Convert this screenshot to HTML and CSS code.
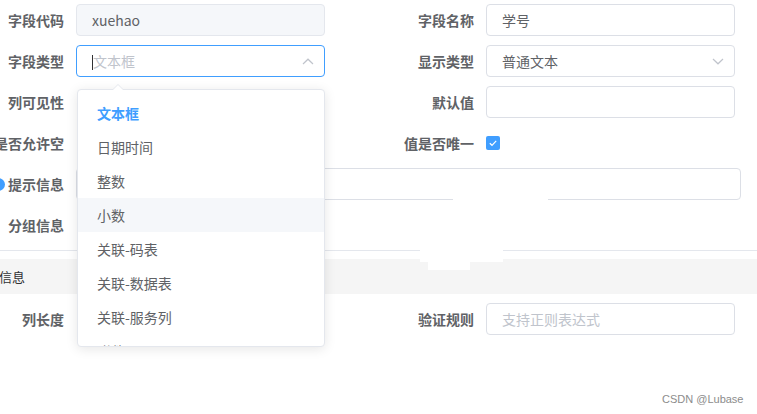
FILE: index.html
```html
<!DOCTYPE html>
<html lang="zh">
<head>
<meta charset="utf-8">
<link rel="stylesheet" href="styles.css">
</head>
<body>
<div class="page">
  <div class="row">
    <div class="item">
      <label class="label">字段代码</label>
      <div class="input disabled">xuehao</div>
    </div>
    <div class="item">
      <label class="label">字段名称</label>
      <div class="input">学号</div>
    </div>
  </div>
  <div class="row">
    <div class="item">
      <label class="label">字段类型</label>
      <div class="input select focused">
        <span class="caret"></span><span class="placeholder">文本框</span>
        <svg class="arrow" width="12" height="7" viewBox="0 0 12 7"><path d="M1 6L6 1.2L11 6" fill="none" stroke="#c0c4cc" stroke-width="1.2"/></svg>
      </div>
    </div>
    <div class="item">
      <label class="label">显示类型</label>
      <div class="input select">
        <span>普通文本</span>
        <svg class="arrow" width="12" height="7" viewBox="0 0 12 7"><path d="M1 1L6 5.8L11 1" fill="none" stroke="#c0c4cc" stroke-width="1.2"/></svg>
      </div>
    </div>
  </div>
  <div class="row">
    <div class="item">
      <label class="label">列可见性</label>
    </div>
    <div class="item">
      <label class="label">默认值</label>
      <div class="input"></div>
    </div>
  </div>
  <div class="row">
    <div class="item">
      <label class="label">是否允许空</label>
    </div>
    <div class="item">
      <label class="label">值是否唯一</label>
      <span class="checkbox"><svg width="14" height="14" viewBox="0 0 14 14"><path d="M3.8 7.2L6 9.3L10.2 4.8" fill="none" stroke="#fff" stroke-width="1.2"/></svg></span>
    </div>
  </div>
  <div class="row">
    <div class="item wide">
      <label class="label"><span class="help"></span>提示信息</label>
      <div class="input long"></div>
    </div>
  </div>
  <div class="row">
    <div class="item">
      <label class="label">分组信息</label>
    </div>
  </div>
  <div class="divider"></div>
  <div class="band">信息</div>
  <div class="row">
    <div class="item">
      <label class="label">列长度</label>
    </div>
    <div class="item">
      <label class="label">验证规则</label>
      <div class="input"><span class="placeholder">支持正则表达式</span></div>
    </div>
  </div>
</div>

<div class="dropdown">
  <span class="popper-arrow"></span>
  <ul class="options">
    <li class="option selected">文本框</li>
    <li class="option">日期时间</li>
    <li class="option">整数</li>
    <li class="option hover">小数</li>
    <li class="option">关联-码表</li>
    <li class="option">关联-数据表</li>
    <li class="option">关联-服务列</li>
    <li class="option">附件</li>
  </ul>
</div>

<div class="patch patch-a"></div>
<div class="patch patch-b"></div>
<div class="patch patch-c"></div>

<div class="watermark">CSDN @Lubase</div>
</body>
</html>
```
FILE: styles.css
```css
html, body {
  margin: 0;
  padding: 0;
}
body {
  width: 757px;
  height: 414px;
  overflow: hidden;
  position: relative;
  background: #fff;
  font-family: "Noto Sans CJK SC", "Microsoft YaHei", sans-serif;
  font-size: 14px;
  color: #606266;
}
.page {
  margin-left: -12px;
  padding-top: 4px;
  width: 781px;
}
.row {
  display: grid;
  grid-template-columns: 410px 410px;
  height: 32px;
  margin-bottom: 9px;
}
.item {
  display: flex;
  align-items: center;
  height: 32px;
}
.item.wide {
  grid-column: 1 / 3;
}
.label {
  width: 88px;
  flex: none;
  box-sizing: border-box;
  padding-right: 12px;
  display: flex;
  justify-content: flex-end;
  align-items: center;
  gap: 3px;
  line-height: 32px;
  white-space: nowrap;
  font-weight: 700;
  color: #606266;
}
.input {
  position: relative;
  width: 249px;
  height: 32px;
  box-sizing: border-box;
  border: 1px solid #dcdfe6;
  border-radius: 4px;
  padding: 0 15px;
  line-height: 30px;
  color: #606266;
  background: #fff;
}
.input.long {
  width: 665px;
}
.input.disabled {
  background: #f5f7fa;
  border-color: #e4e7ed;
}
.input.focused {
  border-color: #409eff;
}
.placeholder {
  color: #c0c4cc;
}
.caret {
  display: inline-block;
  width: 1px;
  height: 15px;
  background: #303133;
  vertical-align: -3px;
}
.arrow {
  position: absolute;
  right: 10px;
  top: 12px;
}
.checkbox {
  width: 14px;
  height: 14px;
  border-radius: 2px;
  background: #409eff;
  display: block;
}
.checkbox svg {
  display: block;
}
.help {
  width: 13px;
  height: 13px;
  border-radius: 50%;
  background: #409eff;
  flex: none;
}
.divider {
  height: 1px;
  background: #e4e7ed;
  margin-bottom: 8px;
}
.band {
  height: 35px;
  line-height: 35px;
  background: #f5f5f5;
  padding-left: 11px;
  margin-bottom: 9px;
  color: #303133;
  font-size: 13px;
}
.dropdown {
  position: absolute;
  left: 77px;
  top: 89px;
  width: 248px;
  height: 258px;
  box-sizing: border-box;
  border: 1px solid #e4e7ed;
  border-radius: 4px;
  background: #fff;
  box-shadow: 0 2px 12px rgba(0, 0, 0, 0.1);
}
.popper-arrow {
  position: absolute;
  left: 34px;
  top: -6px;
  width: 0;
  height: 0;
  border-left: 6px solid transparent;
  border-right: 6px solid transparent;
  border-bottom: 6px solid #e4e7ed;
}
.popper-arrow::after {
  content: "";
  position: absolute;
  left: -5px;
  top: 1px;
  border-left: 5px solid transparent;
  border-right: 5px solid transparent;
  border-bottom: 5px solid #fff;
}
.options {
  list-style: none;
  margin: 0;
  padding: 6px 0;
  height: 100%;
  box-sizing: border-box;
  overflow: hidden;
  border-radius: 4px;
}
.option {
  height: 34px;
  line-height: 34px;
  padding: 0 19px;
  color: #606266;
  white-space: nowrap;
}
.option.selected {
  color: #409eff;
  font-weight: 700;
}
.option.hover {
  background: #f5f7fa;
}
.patch {
  position: absolute;
  background: #fff;
}
.patch-a {
  left: 453px;
  top: 198px;
  width: 95px;
  height: 4px;
}
.patch-b {
  left: 420px;
  top: 249px;
  width: 83px;
  height: 13px;
}
.patch-c {
  left: 428px;
  top: 262px;
  width: 42px;
  height: 8px;
}
.watermark {
  position: absolute;
  left: 662px;
  top: 393px;
  font-family: "Liberation Sans", Arial, sans-serif;
  font-size: 11px;
  color: #8c8c8c;
}
```
